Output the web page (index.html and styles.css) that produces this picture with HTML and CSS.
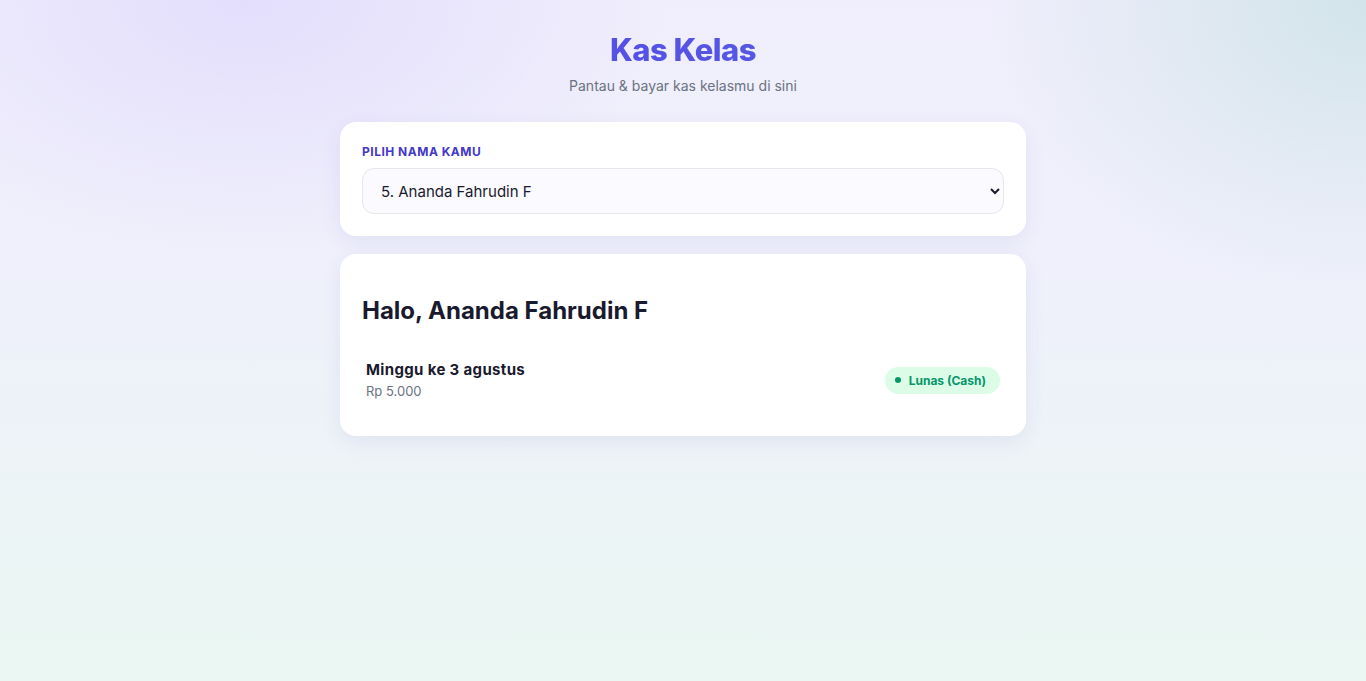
FILE: index.html
```html
<!DOCTYPE html>
<html lang="id">
<head>
    <meta charset="UTF-8">
    <meta name="viewport" content="width=device-width, initial-scale=1.0">
    <link rel="stylesheet" href="styles.css">
    <title>Kas Kelas</title>
</head>
<body>
    <div class="wrap">
        <!-- header -->
        <header class="head">
            <h1 class="title">Kas Kelas</h1>
            <p class="sub">Pantau &amp; bayar kas kelasmu di sini</p>
        </header>

        <!-- pilih nama -->
        <section class="card">
            <label class="lbl" for="nama">Pilih Nama Kamu</label>
            <select class="pick" id="nama">
                <option>1. Adi Saputra</option>
                <option>2. Alya Rahma</option>
                <option>3. Amelia Putri</option>
                <option>4. Anisa Nur</option>
                <option selected>5. Ananda Fahrudin F</option>
            </select>
        </section>

        <!-- riwayat -->
        <section class="card">
            <h2 class="halo">Halo, Ananda Fahrudin F</h2>
            <div class="row">
                <div>
                    <div class="week">Minggu ke 3 agustus</div>
                    <div class="price">Rp 5.000</div>
                </div>
                <span class="badge"><i class="dot"></i>Lunas (Cash)</span>
            </div>
        </section>
    </div>
</body>
</html>
```

FILE: styles.css
```css
* {
    box-sizing: border-box;
}
html, body {
    height: 100%;
}
body {
    margin: 0;
    font-family: Inter, "Noto Sans", sans-serif;
    color: #1a1a2e;
    background:
        radial-gradient(ellipse 420px 260px at 18% 0%, rgba(224, 218, 252, 0.8), rgba(224, 218, 252, 0) 100%),
        radial-gradient(ellipse 380px 300px at 100% 0%, rgba(210, 228, 234, 1), rgba(210, 228, 234, 0) 100%),
        linear-gradient(180deg, #f0eefc 0%, #eff0fb 40%, #eaf7f2 100%);
}
.wrap {
    width: 686px;
    margin: 0 auto;
    padding-top: 30px;
}
.head {
    text-align: center;
    margin-bottom: 26px;
}
.title {
    margin: 0;
    font-size: 31px;
    font-weight: 800;
    letter-spacing: -0.5px;
    line-height: 40px;
    color: #4f46e5;
    background: linear-gradient(90deg, #4f46e5, #5b62e4);
    -webkit-background-clip: text;
    background-clip: text;
    -webkit-text-fill-color: transparent;
}
.sub {
    margin: 6px 0 0;
    font-size: 14px;
    line-height: 20px;
    color: #6b7280;
}
.card {
    background: #fff;
    border-radius: 16px;
    padding: 22px;
    margin-bottom: 18px;
    box-shadow: 0 6px 20px rgba(80, 70, 180, 0.08);
}
.lbl {
    display: block;
    font-size: 12px;
    font-weight: 700;
    text-transform: uppercase;
    letter-spacing: 0.5px;
    color: #4338ca;
    line-height: 16px;
    margin: 0 0 8px;
}
.pick {
    display: block;
    width: 100%;
    height: 46px;
    padding: 0 14px;
    font-family: Inter, "Noto Sans", sans-serif;
    font-size: 15px;
    color: #1a1a2e;
    background: #fafaff;
    border: 1px solid #e5e7eb;
    border-radius: 12px;
}
.halo {
    margin: 20px 0 22px;
    font-size: 24px;
    font-weight: 700;
    line-height: 30px;
    color: #1a1a2e;
}
.row {
    display: flex;
    align-items: center;
    justify-content: space-between;
    padding: 12px 4px 14px;
}
.week {
    font-size: 15px;
    font-weight: 700;
    letter-spacing: 0.35px;
    line-height: 20px;
}
.price {
    font-size: 13px;
    line-height: 18px;
    margin-top: 2px;
    color: #6b7280;
}
.badge {
    display: inline-flex;
    align-items: center;
    gap: 8px;
    height: 27px;
    padding: 0 14px 0 10px;
    border-radius: 14px;
    background: #dcfce7;
    color: #059669;
    font-size: 12px;
    font-weight: 700;
}
.dot {
    width: 6px;
    height: 6px;
    border-radius: 50%;
    background: #059669;
}
```
